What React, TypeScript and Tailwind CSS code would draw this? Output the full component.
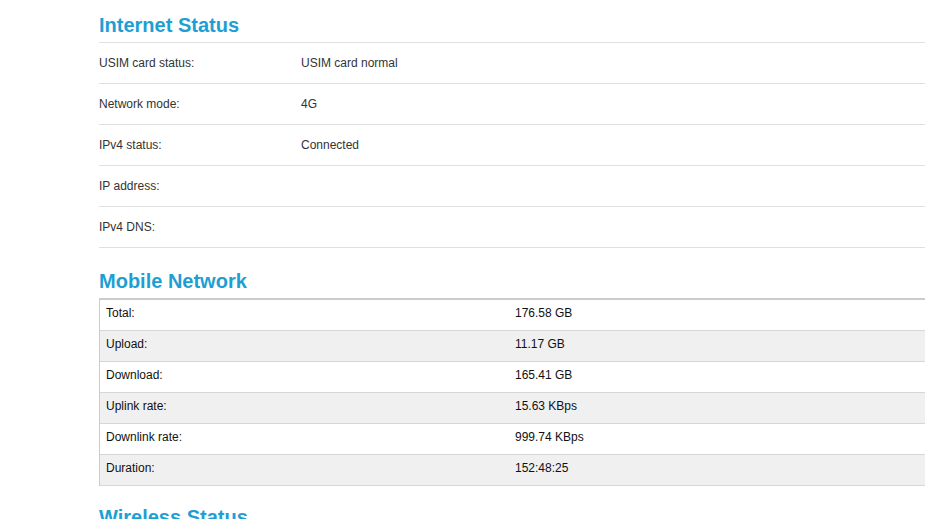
import React from "react";

const internetRows = [
  { label: "USIM card status:", value: "USIM card normal" },
  { label: "Network mode:", value: "4G" },
  { label: "IPv4 status:", value: "Connected" },
  { label: "IP address:", value: "" },
  { label: "IPv4 DNS:", value: "" },
];

const mobileRows = [
  { label: "Total:", value: "176.58 GB" },
  { label: "Upload:", value: "11.17 GB" },
  { label: "Download:", value: "165.41 GB" },
  { label: "Uplink rate:", value: "15.63 KBps" },
  { label: "Downlink rate:", value: "999.74 KBps" },
  { label: "Duration:", value: "152:48:25" },
];

const Heading = ({ children }: { children: React.ReactNode }) => (
  <h2 className="text-[20px] leading-[24px] font-bold text-[#1e9fd4]">{children}</h2>
);

export default function App() {
  return (
    <div
      className="w-[925px] h-[519px] overflow-hidden bg-white pl-[99px] text-[12px] text-[#333]"
      style={{ fontFamily: '"Liberation Sans", Arial, sans-serif' }}
    >
      <div className="w-[900px]">
        <div className="pt-[13px] pb-[5px]">
          <Heading>Internet Status</Heading>
        </div>
        <div className="border-t border-[#e0e0e0]">
          {internetRows.map((row, i) => (
            <div key={i} className="flex items-center h-[41px] border-b border-[#e0e0e0]">
              <span className="w-[202px]">{row.label}</span>
              <span>{row.value}</span>
            </div>
          ))}
        </div>

        <div className="pt-[21px] pb-[5px]">
          <Heading>Mobile Network</Heading>
        </div>
        <div className="border-t-2 border-l border-[#cccccc]">
          {mobileRows.map((row, i) => (
            <div
              key={i}
              className={
                "flex items-center h-[31px] border-b border-[#d6d6d6] pl-[6px] pb-[4px] " +
                (i % 2 === 1 ? "bg-[#f0f0f0]" : "bg-white")
              }
            >
              <span className="w-[409px] text-[#111]">{row.label}</span>
              <span className="text-[#111]">{row.value}</span>
            </div>
          ))}
        </div>

        <div className="pt-[19px]">
          <Heading>Wireless Status</Heading>
        </div>
      </div>
    </div>
  );
}
